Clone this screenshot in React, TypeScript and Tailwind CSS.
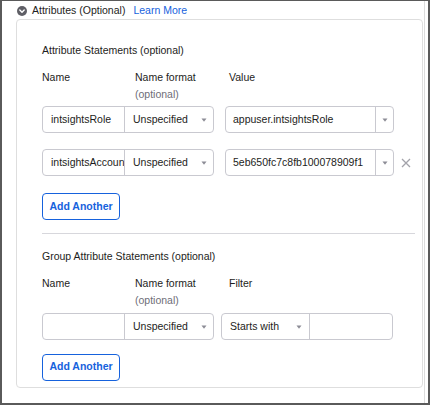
import React from 'react';

const font = { fontFamily: '"Liberation Sans", Arial, sans-serif' };

const Caret = () => (
  <svg width="6" height="4" viewBox="0 0 6 4" className="shrink-0">
    <path d="M0.5 0.5 L5.5 0.5 L3 3.8 Z" fill="#8c8c96" />
  </svg>
);

const NameAndFormat: React.FC<{ name: string }> = ({ name }) => (
  <div className="flex h-[27px] w-[172px] shrink-0 rounded-[4px] border border-[#c9c9d0] bg-white text-[10.5px] text-[#1d1d21]">
    <div className="w-[81px] shrink-0 overflow-hidden whitespace-nowrap pl-[8px] leading-[25px]">{name}</div>
    <div className="flex flex-1 items-center justify-between border-l border-[#c9c9d0] pl-[8px] pr-[6px]">
      <span>Unspecified</span>
      <Caret />
    </div>
  </div>
);

const ColumnHeads: React.FC<{ third: string }> = ({ third }) => (
  <div className="mt-[11px] flex text-[10.5px] text-[#1d1d21]">
    <div className="w-[93px] shrink-0 leading-[17px]">Name</div>
    <div className="w-[94px] shrink-0">
      <div className="leading-[17px]">Name format</div>
      <div className="leading-[17px] text-[#6e6e78]">(optional)</div>
    </div>
    <div className="leading-[17px]">{third}</div>
  </div>
);

const AddButton = () => (
  <button className="h-[27px] w-[78px] rounded-[4px] border border-[#1662dd] bg-white text-[10.5px] font-bold text-[#1662dd]">
    Add Another
  </button>
);

const ValueBox: React.FC<{ value: string }> = ({ value }) => (
  <div className="ml-[11px] flex h-[27px] w-[169px] rounded-[4px] border border-[#c9c9d0] text-[10.5px] text-[#1d1d21]">
    <div className="flex-1 overflow-hidden whitespace-nowrap pl-[7px] leading-[25px]">{value}</div>
    <div className="flex w-[18px] items-center justify-center border-l border-[#c9c9d0]">
      <Caret />
    </div>
  </div>
);

export default function App() {
  return (
    <div className="h-[405px] w-[430px] overflow-hidden border-t border-l-2 border-r-2 border-b-2 border-[#5a5a5a] bg-white" style={font}>
      <div className="mr-[3px] h-full border-r border-[#dcdcdc]">
        <div className="flex h-[18px] items-center pl-[15px] pt-[1px] text-[10.5px]">
          <svg width="10" height="10" viewBox="0 0 10 10" className="shrink-0">
            <circle cx="5" cy="5" r="5" fill="#5f5f66" />
            <path d="M2.8 4 L5 6.2 L7.2 4" fill="none" stroke="#fff" strokeWidth="1.4" strokeLinecap="round" strokeLinejoin="round" />
          </svg>
          <span className="ml-[5px] text-[#1d1d21]">Attributes (Optional)</span>
          <span className="ml-[8px] text-[#1662dd]">Learn More</span>
        </div>
        <div className="ml-[14px] h-[369px] w-[407px] rounded-[4px] border border-[#dedede] pl-[25px] pt-[22px]">
          <div className="text-[10.5px] leading-[16px] text-[#1d1d21]">Attribute Statements (optional)</div>
          <ColumnHeads third="Value" />
          <div className="mt-[3px] flex items-center">
            <NameAndFormat name="intsightsRole" />
            <ValueBox value="appuser.intsightsRole" />
          </div>
          <div className="mt-[16px] flex items-center">
            <NameAndFormat name="intsightsAccountId" />
            <ValueBox value="5eb650fc7c8fb100078909f1" />
            <svg width="10" height="10" viewBox="0 0 10 10" className="ml-[7px]">
              <path d="M1 1 L9 9 M9 1 L1 9" stroke="#a3a3aa" strokeWidth="1.3" />
            </svg>
          </div>
          <div className="mt-[17px]">
            <AddButton />
          </div>
          <div className="mr-[7px] mt-[13px] border-t border-[#d7d7dc]" />
          <div className="mt-[14px] text-[10.5px] leading-[16px] text-[#1d1d21]">Group Attribute Statements (optional)</div>
          <ColumnHeads third="Filter" />
          <div className="mt-[4px] flex items-center">
            <NameAndFormat name="" />
            <div className="ml-[7px] flex h-[27px] w-[172px] rounded-[4px] border border-[#c9c9d0] text-[10.5px] text-[#1d1d21]">
              <div className="flex w-[88px] items-center justify-between border-r border-[#c9c9d0] pl-[8px] pr-[7px]">
                <span>Starts with</span>
                <Caret />
              </div>
              <div className="flex-1" />
            </div>
          </div>
          <div className="mt-[13px]">
            <AddButton />
          </div>
        </div>
      </div>
    </div>
  );
}
